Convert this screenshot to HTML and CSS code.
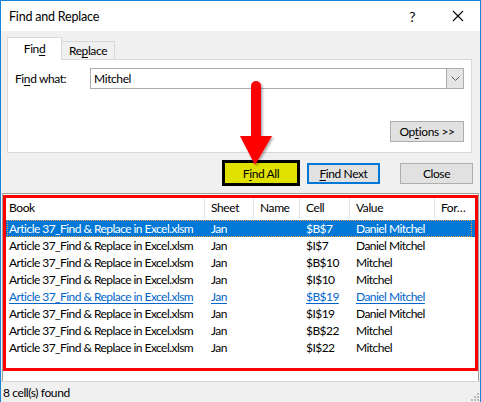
FILE: index.html
```html
<!DOCTYPE html>
<html>
<head>
<meta charset="utf-8">
<link rel="stylesheet" href="styles.css">
</head>
<body>
<div class="window">
  <div class="titlebar">
    <span class="title">Find and Replace</span>
    <span class="tb-btn help">?</span>
    <span class="tb-btn close">
      <svg width="12" height="12" viewBox="0 0 12 12"><path d="M1 1 L11 11 M11 1 L1 11" stroke="#000" stroke-width="1.1" fill="none"/></svg>
    </span>
  </div>

  <div class="top">
    <div class="tabs">
      <div class="tab active">Fin<u>d</u></div>
      <div class="tab">Re<u>p</u>lace</div>
    </div>
    <div class="panel">
      <div class="find-row">
        <span class="label">Fi<u>n</u>d what:</span>
        <div class="combo">
          <span class="combo-text">Mitchel</span>
          <span class="combo-btn">
            <svg width="9" height="5" viewBox="0 0 9 5"><path d="M0.5 0.5 L4.5 4.5 L8.5 0.5" stroke="#606060" stroke-width="1" fill="none"/></svg>
          </span>
        </div>
      </div>
      <div class="options-row">
        <div class="btn options">Op<u>t</u>ions &gt;&gt;</div>
      </div>
    </div>
  </div>

  <div class="buttons">
    <div class="btn findall">F<u>i</u>nd All</div>
    <div class="btn findnext"><u>F</u>ind Next</div>
    <div class="btn closebtn">Close</div>
  </div>

  <div class="list">
    <div class="grid header">
      <div class="hcell">Book</div>
      <div class="hcell">Sheet</div>
      <div class="hcell">Name</div>
      <div class="hcell">Cell</div>
      <div class="hcell">Value</div>
      <div class="hcell last">For…</div>
    </div>
    <div class="grid row selected">
      <div class="cell">Article 37_Find &amp; Replace in Excel.xlsm</div><div class="cell">Jan</div><div class="cell"></div><div class="cell">$B$7</div><div class="cell">Daniel Mitchel</div><div class="cell"></div>
    </div>
    <div class="grid row">
      <div class="cell">Article 37_Find &amp; Replace in Excel.xlsm</div><div class="cell">Jan</div><div class="cell"></div><div class="cell">$I$7</div><div class="cell">Daniel Mitchel</div><div class="cell"></div>
    </div>
    <div class="grid row">
      <div class="cell">Article 37_Find &amp; Replace in Excel.xlsm</div><div class="cell">Jan</div><div class="cell"></div><div class="cell">$B$10</div><div class="cell">Mitchel</div><div class="cell"></div>
    </div>
    <div class="grid row">
      <div class="cell">Article 37_Find &amp; Replace in Excel.xlsm</div><div class="cell">Jan</div><div class="cell"></div><div class="cell">$I$10</div><div class="cell">Mitchel</div><div class="cell"></div>
    </div>
    <div class="grid row hover">
      <div class="cell"><span>Article 37_Find &amp; Replace in Excel.xlsm</span></div><div class="cell"><span>Jan</span></div><div class="cell"></div><div class="cell"><span>$B$19</span></div><div class="cell"><span>Daniel Mitchel</span></div><div class="cell"></div>
    </div>
    <div class="grid row">
      <div class="cell">Article 37_Find &amp; Replace in Excel.xlsm</div><div class="cell">Jan</div><div class="cell"></div><div class="cell">$I$19</div><div class="cell">Daniel Mitchel</div><div class="cell"></div>
    </div>
    <div class="grid row">
      <div class="cell">Article 37_Find &amp; Replace in Excel.xlsm</div><div class="cell">Jan</div><div class="cell"></div><div class="cell">$B$22</div><div class="cell">Mitchel</div><div class="cell"></div>
    </div>
    <div class="grid row">
      <div class="cell">Article 37_Find &amp; Replace in Excel.xlsm</div><div class="cell">Jan</div><div class="cell"></div><div class="cell">$I$22</div><div class="cell">Mitchel</div><div class="cell"></div>
    </div>
    <div class="highlight"></div>
  </div>

  <div class="status">
    <span>8 cell(s) found</span>
    <svg class="grip" width="10" height="10" viewBox="0 0 10 10">
      <rect x="8" y="2" width="2" height="2" fill="#b8b8b8"/>
      <rect x="5" y="5" width="2" height="2" fill="#b8b8b8"/>
      <rect x="8" y="5" width="2" height="2" fill="#b8b8b8"/>
      <rect x="2" y="8" width="2" height="2" fill="#b8b8b8"/>
      <rect x="5" y="8" width="2" height="2" fill="#b8b8b8"/>
      <rect x="8" y="8" width="2" height="2" fill="#b8b8b8"/>
    </svg>
  </div>

  <svg class="arrow" width="40" height="92" viewBox="0 0 40 92">
    <defs>
      <filter id="sh" x="-30%" y="-10%" width="160%" height="130%">
        <feDropShadow dx="1.5" dy="1.5" stdDeviation="1" flood-color="#000" flood-opacity="0.35"/>
      </filter>
    </defs>
    <g filter="url(#sh)">
      <rect x="15" y="2" width="10" height="60" rx="5" fill="#ff0000"/>
      <polygon points="4,57 36,57 19,86" fill="#ff0000"/>
    </g>
  </svg>
</div>
</body>
</html>
```

FILE: styles.css
```css
* { box-sizing: border-box; }
html, body { margin: 0; padding: 0; background: #ffffff; }
body {
  font-family: Lato, "Noto Sans", sans-serif;
  font-size: 12px;
  letter-spacing: -0.4px;
  color: #000;
}
u { text-decoration: underline; text-underline-offset: 2px; text-decoration-thickness: 1px; }

.window {
  position: relative;
  width: 481px;
  height: 402px;
  border: 1px solid #1883d7;
  border-bottom: none;
  background: #f0f0f0;
  display: flex;
  flex-direction: column;
  overflow: hidden;
}

.titlebar {
  height: 30px;
  flex: none;
  background: #ffffff;
  display: flex;
  align-items: center;
  padding-left: 8px;
}
.title { flex: 1; font-size: 12.5px; letter-spacing: -0.2px; }
.tb-btn {
  width: 45px;
  height: 30px;
  display: flex;
  align-items: center;
  justify-content: center;
}
.help { font-size: 14px; letter-spacing: 0; }

.top { padding: 7px 0 0 6px; flex: none; }
.tabs { display: flex; align-items: flex-end; height: 22px; position: relative; z-index: 1; margin-bottom: -1px; }
.tab {
  height: 19px;
  padding: 0 9px;
  width: 53px;
  border: 1px solid #d9d9d9;
  border-left: none;
  border-bottom: 1px solid #d9d9d9;
  background: #f0f0f0;
  display: flex;
  align-items: center;
  justify-content: center;
}
.tab.active {
  width: 55px;
  height: 23px;
  border-left: 1px solid #d9d9d9;
  border-bottom: none;
  background: #ffffff;
  padding-bottom: 2px;
}

.panel {
  width: 465px;
  height: 94px;
  border: 1px solid #d9d9d9;
  background: #ffffff;
  padding: 8px 7px 0 7px;
  display: flex;
  flex-direction: column;
}
.find-row { display: flex; align-items: center; height: 20px; }
.label { width: 75px; flex: none; }
.combo {
  flex: 1;
  height: 21px;
  border: 1px solid #acacac;
  display: flex;
  align-items: center;
}
.combo-text { flex: 1; padding-left: 3px; }
.combo-btn {
  width: 17px;
  height: 19px;
  background: #e5e5e5;
  border-left: 1px solid #acacac;
  display: flex;
  align-items: center;
  justify-content: center;
}
.options-row { display: flex; justify-content: flex-end; margin-top: 33px; }

.btn {
  display: flex;
  align-items: center;
  justify-content: center;
  background: #e1e1e1;
  border: 1px solid #adadad;
  height: 21px;
}
.options { width: 74px; }

.buttons {
  flex: none;
  display: flex;
  align-items: center;
  justify-content: flex-end;
  padding-right: 7px;
  margin-top: 7px;
  height: 26px;
}
.findall {
  width: 78px;
  height: 26px;
  background: #e1e100;
  border: 3px solid #000;
  margin-right: 7px;
}
.findnext {
  width: 73px;
  border: 2px solid #0078d7;
  margin-right: 20px;
}
.closebtn { width: 73px; }

.list {
  position: relative;
  flex: none;
  margin: 7px 1px 0 1px;
  height: 188px;
  background: #ffffff;
  border: 1px solid #a0a0a0;
  border-bottom: none;
}
.grid {
  display: grid;
  grid-template-columns: 202px 49px 46px 50px 85px 1fr;
}
.header { height: 26px; }
.hcell {
  display: flex;
  align-items: center;
  padding-left: 6px;
  border-right: 1px solid #e5e5e5;
  margin: 2px 0;
}
.hcell.last { border-right: none; }
.row { height: 17px; position: relative; letter-spacing: -0.55px; }
.cell {
  padding-left: 6px;
  line-height: 17px;
  white-space: nowrap;
  overflow: hidden;
  position: relative;
}
.row.selected {
  background: #0078d7;
  color: #ffffff;
}
.row.selected::after {
  content: "";
  position: absolute;
  left: 4px;
  right: 6px;
  top: 0;
  bottom: 0;
  border: 1px dotted #e8a040;
}
.row.hover { color: #0066cc; }
.row.hover span { text-decoration: underline; text-underline-offset: 2px; }

.highlight {
  position: absolute;
  left: 0;
  top: 1px;
  width: 475px;
  height: 176px;
  border: 3px solid #ff0000;
}

.status {
  flex: 1;
  border-top: 1px solid #d7d7d7;
  display: flex;
  align-items: center;
  padding-left: 2px;
  position: relative;
}
.grip { position: absolute; right: 1px; bottom: 1px; }

.arrow {
  position: absolute;
  left: 235px;
  top: 78px;
}
```
